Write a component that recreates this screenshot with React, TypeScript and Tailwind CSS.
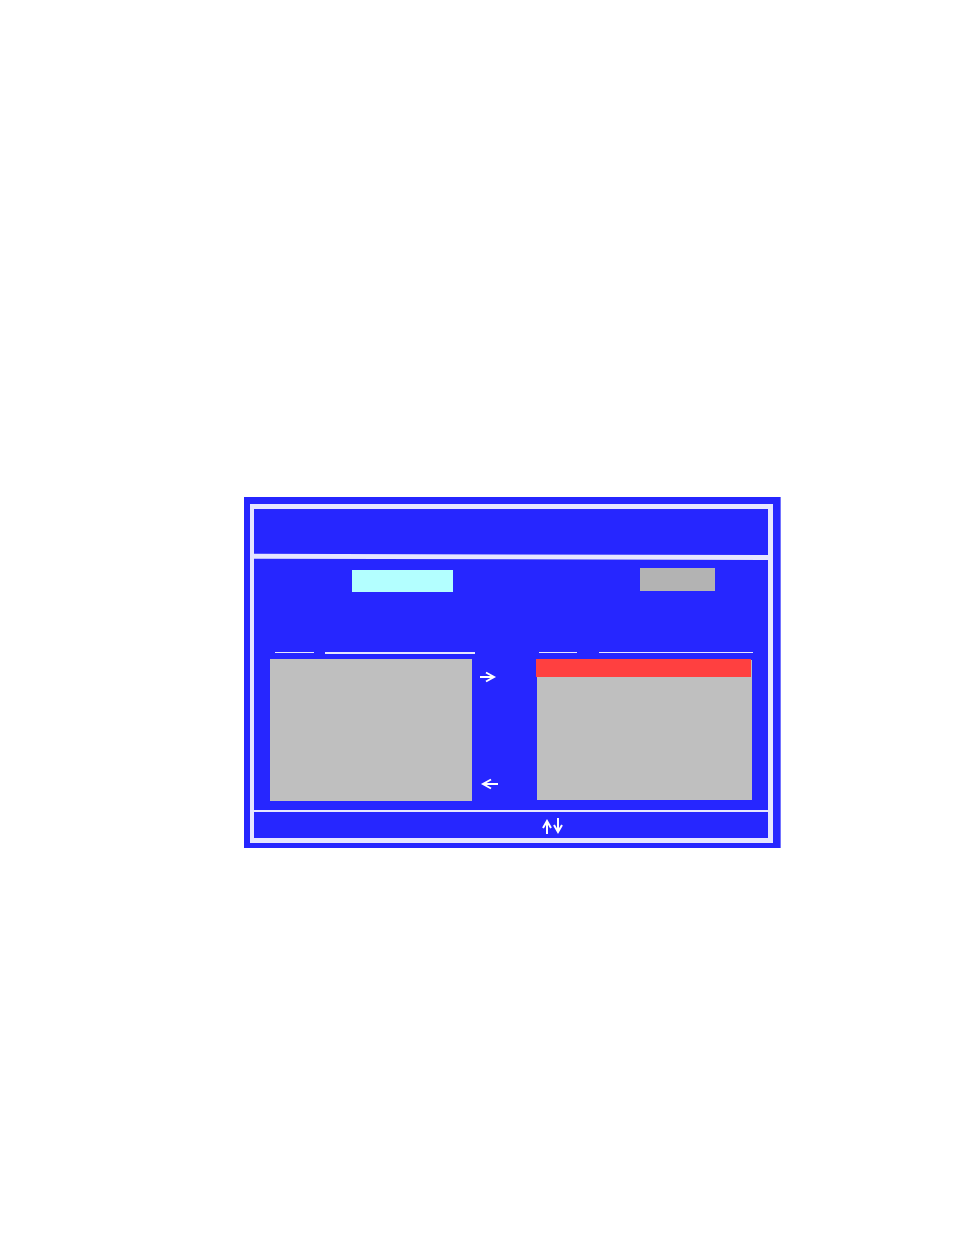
type ArrowProps = { d: string; label: string };

function ArrowButton({ d, label }: ArrowProps) {
  return (
    <button type="button" aria-label={label} className="block h-4 w-5">
      <svg viewBox="0 0 20 16" className="h-4 w-5" fill="none" stroke="#ffffff" strokeWidth="2">
        <path d={d} />
      </svg>
    </button>
  );
}

export default function App() {
  return (
    <main className="min-h-screen bg-white pt-[497px] pr-[173px] pl-[244px]">
      <section className="border-r border-[#7373ff] bg-[#2626ff] pt-[7px] pr-[7px] pb-[5px] pl-[6px]">
        <div className="border-5 border-l-4 border-[#e6e6ff]">
          <header className="h-11" />
          <svg viewBox="0 0 514 7" preserveAspectRatio="none" className="block h-[7px] w-full" aria-hidden="true">
            <polygon points="0,0.85 514,2.05 514,6.95 0,5.65" fill="#e6e6ff" />
          </svg>

          <div className="grid grid-cols-[205fr_61fr_217fr] pt-2 pr-[15px] pb-[9px] pl-4">
            <div className="flex h-[84px] justify-end pt-[2px] pr-[22px]">
              <button type="button" aria-label="Primary" className="h-[22px] w-[101px] bg-[#b3ffff]" />
            </div>
            <div />
            <div className="flex h-[84px] justify-end pr-[38px]">
              <button type="button" aria-label="Secondary" className="h-[23px] w-[75px] bg-[#b3b3b3]" />
            </div>

            <div className="flex h-[7px] items-start gap-[11px] pl-[5px]">
              <div className="h-px w-[39px] bg-[#e6e6ff]" />
              <div className="h-[2px] flex-1 bg-[#e6e6ff]" />
            </div>
            <div />
            <div className="flex h-[7px] items-start gap-[22px] pl-[3px]">
              <div className="h-px w-[38px] bg-[#e6e6ff]" />
              <div className="h-px flex-1 bg-[#e6e6ff]" />
            </div>

            <ul aria-label="Available" className="mr-[3px] min-h-[142px] bg-[#bfbfbf]" />
            <div className="flex flex-col justify-between pt-[10px] pb-[9px] pl-[5px]">
              <ArrowButton label="Move right" d="M0 8H14M6 3.5L14 8L6 12.5" />
              <ArrowButton label="Move left" d="M18 8H3M11 3.5L3 8L11 12.5" />
            </div>
            <ul aria-label="Selected" className="m-px flex min-h-[140px] flex-col bg-[#bfbfbf]">
              <li className="-mt-px mr-px -ml-px h-[18px] bg-[#ff4040]" />
            </ul>
          </div>

          <footer className="h-7 border-t-2 border-[#e6e6ff] pt-[5px] pl-[288px]">
            <svg
              viewBox="0 0 22 18"
              className="block h-[18px] w-[22px]"
              fill="none"
              stroke="#ffffff"
              strokeWidth="2"
              role="img"
              aria-label="Up and down"
            >
              <path d="M5 17V4M1 11L5 4L9 11" />
              <path d="M16 1V15M12 8L16 15L20 8" />
            </svg>
          </footer>
        </div>
      </section>
    </main>
  );
}
